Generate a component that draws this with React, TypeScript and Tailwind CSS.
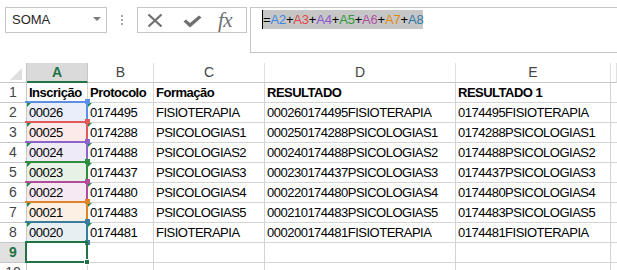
import React from 'react';

// Planilha com a fórmula =A2+...+A8 em edição

const CELL_FONT = "font-['Liberation_Sans',Arial,sans-serif]";

const rows: string[][] = [
  ['Inscrição', 'Protocolo', 'Formação', 'RESULTADO', 'RESULTADO 1'],
  ['00026', '0174495', 'FISIOTERAPIA', '000260174495FISIOTERAPIA', '0174495FISIOTERAPIA'],
  ['00025', '0174288', 'PSICOLOGIAS1', '000250174288PSICOLOGIAS1', '0174288PSICOLOGIAS1'],
  ['00024', '0174488', 'PSICOLOGIAS2', '000240174488PSICOLOGIAS2', '0174488PSICOLOGIAS2'],
  ['00023', '0174437', 'PSICOLOGIAS3', '000230174437PSICOLOGIAS3', '0174437PSICOLOGIAS3'],
  ['00022', '0174480', 'PSICOLOGIAS4', '000220174480PSICOLOGIAS4', '0174480PSICOLOGIAS4'],
  ['00021', '0174483', 'PSICOLOGIAS5', '000210174483PSICOLOGIAS5', '0174483PSICOLOGIAS5'],
  ['00020', '0174481', 'FISIOTERAPIA', '000200174481FISIOTERAPIA', '0174481FISIOTERAPIA'],
  ['', '', '', '', ''],
  ['', '', '', '', ''],
];

// cores das referências A2..A8
const ranges = [
  { fill: 'bg-[#e9eefa]', border: 'border-[#5b8ee6]', handle: 'bg-[#5b8ee6]', text: 'text-[#3f86e0]' },
  { fill: 'bg-[#fce9e9]', border: 'border-[#e05a5a]', handle: 'bg-[#e05a5a]', text: 'text-[#e0474a]' },
  { fill: 'bg-[#efeaf7]', border: 'border-[#8d63c9]', handle: 'bg-[#8d63c9]', text: 'text-[#8a58d0]' },
  { fill: 'bg-[#e7f1e6]', border: 'border-[#2f8d3e]', handle: 'bg-[#2f8d3e]', text: 'text-[#2f9a3c]' },
  { fill: 'bg-[#f6e9f3]', border: 'border-[#b24c9a]', handle: 'bg-[#b24c9a]', text: 'text-[#b050a8]' },
  { fill: 'bg-[#fcf0e4]', border: 'border-[#e08228]', handle: 'bg-[#e08228]', text: 'text-[#df8a12]' },
  { fill: 'bg-[#e8eff3]', border: 'border-[#3a7c9f]', handle: 'bg-[#3a7c9f]', text: 'text-[#2f7aa8]' },
];

const columns = ['A', 'B', 'C', 'D', 'E', ''];

function ErrorMark() {
  return (
    <span className="absolute left-0 top-0 w-0 h-0 border-t-[4px] border-r-[4px] border-t-[#1e8a4a] border-r-transparent" />
  );
}

function Toolbar() {
  return (
    <div className="flex items-start h-[63px] pt-[7px]">
      {/* Caixa de nome */}
      <div className="ml-[5px] w-[102px] h-[26px] border border-[#c6c6c6] flex items-center pl-[6px] pr-[5px]">
        <span className="text-[13px] text-[#262626] font-['Liberation_Sans',Arial,sans-serif]">SOMA</span>
        <span className="ml-auto mt-[-3px] w-0 h-0 border-l-[4px] border-r-[4px] border-t-[4px] border-l-transparent border-r-transparent border-t-[#7a7a7a]" />
      </div>
      <div className="w-[30px] h-[26px] flex flex-col items-center justify-center gap-[2px]">
        <span className="w-[2px] h-[2px] bg-[#a8a8a8]" />
        <span className="w-[2px] h-[2px] bg-[#a8a8a8]" />
        <span className="w-[2px] h-[2px] bg-[#a8a8a8]" />
      </div>
      {/* Cancelar / Inserir / Inserir função */}
      <div className="w-[110px] h-[26px] border border-[#c6c6c6] flex items-center pl-[9px]">
        <svg width="16" height="15" viewBox="0 0 16 15">
          <path d="M1.5 1.5 L14.5 13.5 M14.5 1.5 L1.5 13.5" stroke="#6f6f6f" strokeWidth="2.2" fill="none" />
        </svg>
        <svg className="ml-[20px] mt-[3px]" width="19" height="13" viewBox="0 0 19 13">
          <path d="M0.5 6.5 L3 4.5 L7 8 L16 0.5 L18.5 2.5 L7 12.5 Z" fill="#6f6f6f" />
        </svg>
        <span className="ml-[16px] text-[21px] leading-none italic text-[#6f6f6f] font-['Liberation_Serif','Times_New_Roman',serif] tracking-[-0.5px]">
          fx
        </span>
      </div>
      {/* Barra de fórmulas */}
      <div className="ml-[3px] flex-1 h-[46px] border-l border-t border-b border-[#c6c6c6] pl-[11px] pt-[2px]">
        <div className="inline-flex h-[19px] items-center bg-[#c6c6c6] text-[13px] leading-[19px] font-['Liberation_Sans',Arial,sans-serif] text-black tracking-[-0.2px]">
          <span className="w-[1px] h-[19px] bg-black" />
          <span>=</span>
          {ranges.map((r, i) => (
            <React.Fragment key={i}>
              {i > 0 && <span>+</span>}
              <span className={r.text}>A{i + 2}</span>
            </React.Fragment>
          ))}
        </div>
      </div>
    </div>
  );
}

function Grid() {
  return (
    <div className={`relative ${CELL_FONT}`}>
      <div className="grid grid-cols-[27px_61px_66px_111px_191px_155px_1fr] auto-rows-[20px]">
        {/* Cabeçalho das colunas */}
        <div className="relative border-r border-b border-[#c6c6c6]">
          <svg className="absolute right-[4px] bottom-[2px]" width="12" height="12" viewBox="0 0 12 12">
            <path d="M12 0 L12 12 L0 12 Z" fill="#dfdfdf" />
          </svg>
        </div>
        {columns.map((c, i) =>
          i === 0 ? (
            <div
              key={c}
              className="flex items-center justify-center bg-[#dadada] border-r border-[#c6c6c6] border-b-2 border-b-[#217346] text-[14px] font-bold text-[#217346]"
            >
              {c}
            </div>
          ) : (
            <div
              key={i}
              className="flex items-center justify-center border-r border-r-[#e1e1e1] border-b border-b-[#c6c6c6] text-[14px] text-[#444]"
            >
              {c}
            </div>
          )
        )}

        {rows.map((row, r) => (
          <React.Fragment key={r}>
            <div
              className={`flex items-center justify-center border-r border-b border-[#c6c6c6] text-[14px] ${
                r === 8 ? 'bg-[#e1e1e1] text-[#217346] font-bold' : 'text-[#444]'
              }`}
            >
              {r + 1}
            </div>
            {row.map((v, c) => (
              <div
                key={c}
                className={`relative flex items-center pl-[2px] border-r border-b border-[#d4d4d4] text-[13px] tracking-[-0.5px] text-black whitespace-nowrap overflow-hidden ${
                  r === 0 ? 'font-bold' : ''
                } ${c === 0 && r >= 1 && r <= 7 ? ranges[r - 1].fill : ''}`}
              >
                {v}
                {c <= 1 && r >= 1 && r <= 7 && <ErrorMark />}
              </div>
            ))}
            <div className="border-b border-[#d4d4d4]" />
          </React.Fragment>
        ))}
      </div>

      {/* Realce das referências */}
      {ranges.map((rg, i) => {
        const top = 19 + (i + 1) * 20;
        return (
          <div key={i} className="absolute left-[25px] w-[63px] h-[22px]" style={{ top: top - 1 }}>
            <div className={`absolute inset-0 border-t-2 border-r-2 border-b-2 ${rg.border}`} />
            <div className={`absolute right-[-2px] top-[-2px] w-[5px] h-[5px] ${rg.handle}`} />
            {i === ranges.length - 1 && (
              <div className={`absolute right-[-2px] bottom-[-2px] w-[5px] h-[5px] ${rg.handle}`} />
            )}
          </div>
        );
      })}

      {/* Célula ativa A9 */}
      <div className="absolute left-[25px] top-[178px] w-[63px] h-[22px] border-2 border-[#217346]">
        <div className="absolute right-[-4px] bottom-[-4px] w-[6px] h-[6px] bg-[#217346] border border-white" />
      </div>
    </div>
  );
}

export default function App() {
  return (
    <div className="w-[617px] h-[270px] overflow-hidden bg-white">
      <Toolbar />
      <Grid />
    </div>
  );
}
